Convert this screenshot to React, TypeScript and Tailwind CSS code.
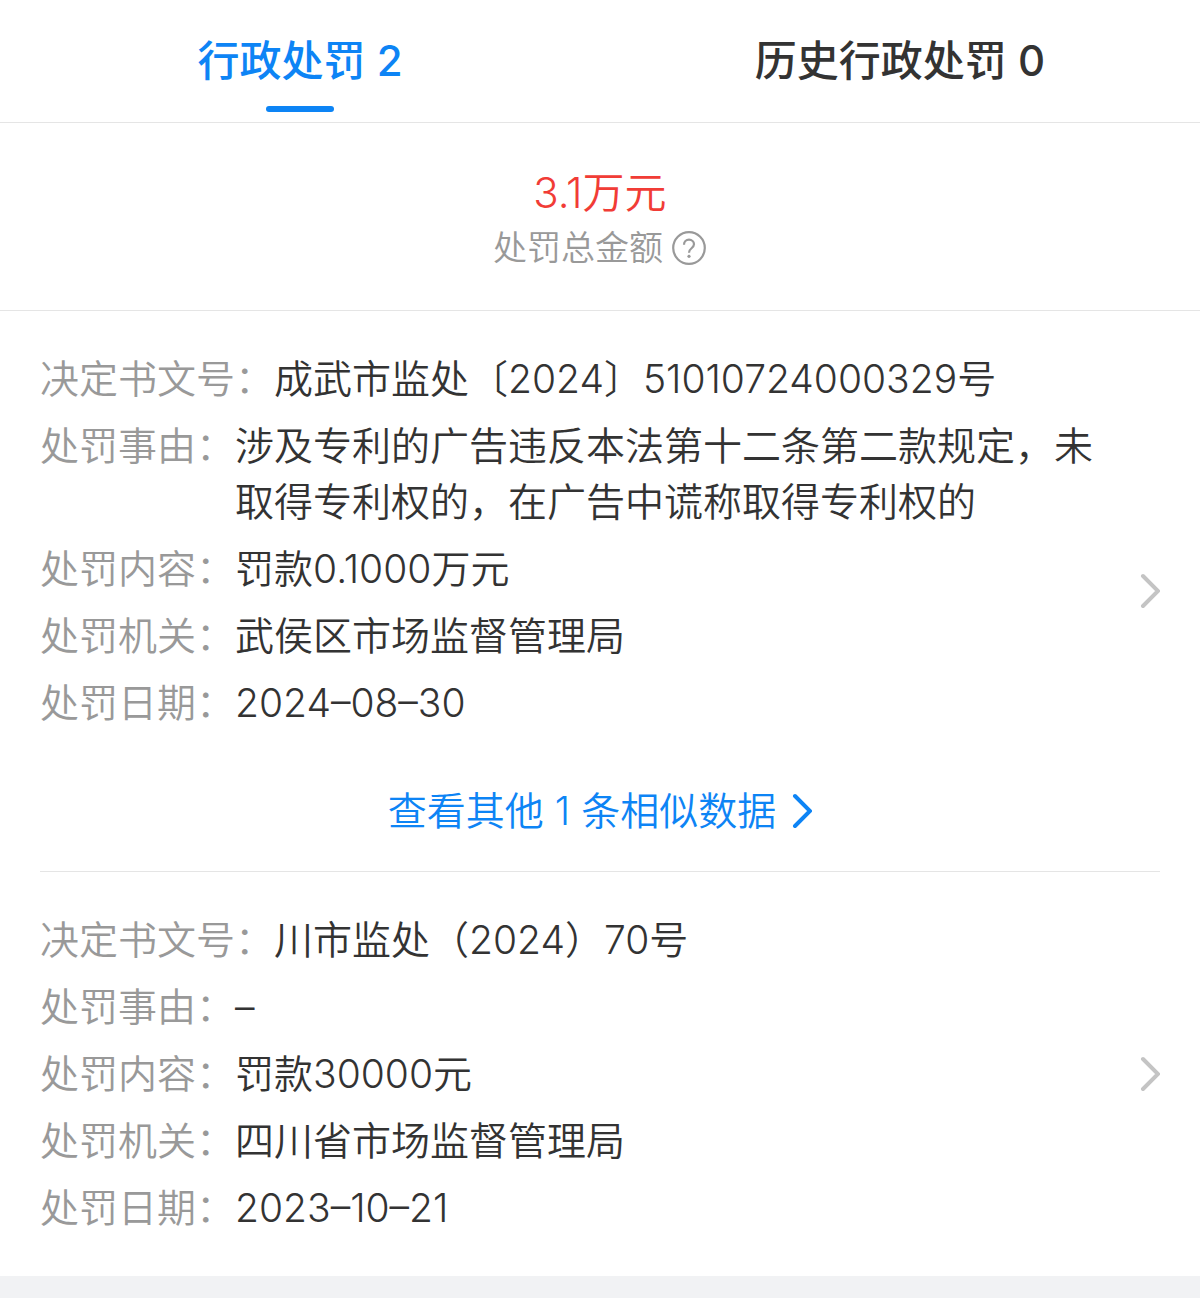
const font = 'font-[Inter,"Noto_Sans_CJK_SC",sans-serif]';

type Field = { label: string; value: string };

const records: { fields: Field[]; similar?: number }[] = [
  {
    fields: [
      { label: "决定书文号", value: "成武市监处〔2024〕51010724000329号" },
      { label: "处罚事由", value: "涉及专利的广告违反本法第十二条第二款规定，未取得专利权的，在广告中谎称取得专利权的" },
      { label: "处罚内容", value: "罚款0.1000万元" },
      { label: "处罚机关", value: "武侯区市场监督管理局" },
      { label: "处罚日期", value: "2024–08–30" },
    ],
    similar: 1,
  },
  {
    fields: [
      { label: "决定书文号", value: "川市监处（2024）70号" },
      { label: "处罚事由", value: "–" },
      { label: "处罚内容", value: "罚款30000元" },
      { label: "处罚机关", value: "四川省市场监督管理局" },
      { label: "处罚日期", value: "2023–10–21" },
    ],
  },
];

export default function App() {
  return (
    <div className={`min-h-screen bg-[#f1f2f4] font-[350] text-[#333333] ${font}`} lang="zh-CN">
      <div className="bg-white">
        <nav className="grid grid-cols-2 border-b border-[#e5e5e5]">
          <Tab label="行政处罚" count={2} active />
          <Tab label="历史行政处罚" count={0} />
        </nav>

        {/* Total amount */}
        <section className="flex flex-col items-center border-b border-[#e5e5e5] pt-10 pb-[37px]">
          <p className="text-[42px] leading-[60px] text-[#f13c36]">3.1万元</p>
          <div className="flex items-center gap-2 text-[34px] leading-[50px] text-[#999999]">
            处罚总金额
            <button type="button" aria-label="说明">
              <HelpIcon />
            </button>
          </div>
        </section>

        <main className="px-10">
          {records.map((record, i) => (
            <Record key={i} {...record} />
          ))}
        </main>
      </div>
    </div>
  );
}

function Tab({ label, count, active }: { label: string; count: number; active?: boolean }) {
  return (
    <button
      type="button"
      className={`flex flex-col items-center pt-8 pb-2.5 text-[42px] leading-[58px] font-medium ${active ? "text-[#0d84f5]" : "text-[#333333]"}`}
    >
      {label} {count}
      <span className={`mt-4 h-1.5 w-17 rounded-full ${active ? "bg-[#0d84f5]" : ""}`} />
    </button>
  );
}

function Record({ fields, similar }: { fields: Field[]; similar?: number }) {
  return (
    <article className="flex items-center border-b border-[#e5e5e5] py-10 text-[39px] last:border-b-0">
      <div className="flex-1">
        <dl className="space-y-[11px] pr-8 leading-[56px]">
          {fields.map((field) => (
            <div key={field.label} className="flex">
              <dt className="shrink-0 text-[#999999]">{field.label}：</dt>
              <dd>{field.value}</dd>
            </div>
          ))}
        </dl>
        {similar && (
          <a href="#similar" className="mt-15 flex items-center justify-center gap-4 pl-5 leading-10 text-[#0d84f5]">
            查看其他 {similar} 条相似数据
            <Arrow />
          </a>
        )}
      </div>
      <Arrow className="text-[#c4c4c4]" />
    </article>
  );
}

function HelpIcon() {
  return (
    <svg className="block" width="36" height="36" viewBox="0 0 36 36" fill="none" stroke="#999999" strokeWidth="2.2">
      <circle cx="18" cy="18" r="15.8" />
      <path d="M13 14.7c0-3 2.2-5 5-5s5 1.9 5 4.6c0 2-1.2 3-2.7 4.2-1.500 1.200-2.300 2-2.300 4.200" />
      <circle cx="18" cy="26.3" r="1.6" fill="#999999" stroke="none" />
    </svg>
  );
}

function Arrow({ className }: { className?: string }) {
  return (
    <svg
      className={`shrink-0 ${className ?? ""}`}
      width="20"
      height="36"
      viewBox="0 0 20 36"
      fill="none"
      stroke="currentColor"
      strokeWidth="4"
      strokeLinecap="round"
    >
      <path d="M3 3l15 15L3 33" />
    </svg>
  );
}
